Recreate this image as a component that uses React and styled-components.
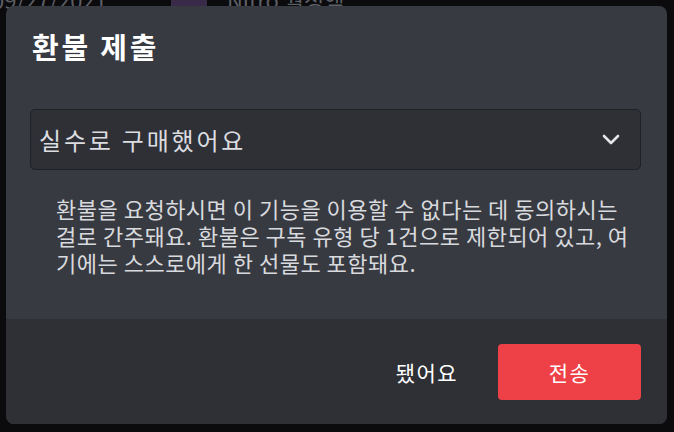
import React from "react";
import styled, { createGlobalStyle } from "styled-components";

const GlobalStyle = createGlobalStyle`
  html, body {
    margin: 0;
    padding: 0;
    background: #0b0b0d;
    overflow: hidden;
  }
  body {
    font-family: "Noto Sans CJK KR", "Noto Sans", sans-serif;
  }
`;

const Page = styled.div`
  width: 674px;
  height: 432px;
  position: relative;
  background: #0b0b0d;
  overflow: hidden;
`;

const BehindRow = styled.div`
  display: flex;
  align-items: center;
  margin-top: -14px;
  margin-left: -8px;
  height: 26px;
  color: #5d5f66;
  font-size: 22px;
  white-space: nowrap;
`;

const Badge = styled.span`
  display: inline-block;
  width: 36px;
  height: 22px;
  border-radius: 3px;
  background: #3a2a4a;
  margin: 0 20px 0 64px;
`;

const Overlay = styled.div`
  position: absolute;
  top: 6px;
  left: 6px;
  width: 661px;
  height: 418px;
  display: flex;
  flex-direction: column;
  border-radius: 8px;
  overflow: hidden;
  background: #383a42;
`;

const Body = styled.div`
  flex: 1;
  display: flex;
  flex-direction: column;
  padding: 22px 26px 0 24px;
`;

const Title = styled.h2`
  margin: 0;
  color: #ffffff;
  font-size: 29px;
  font-weight: 700;
  line-height: 36px;
  letter-spacing: 2.8px;
  padding-left: 2px;
`;

const Select = styled.div`
  margin-top: 45px;
  height: 61px;
  box-sizing: border-box;
  display: flex;
  align-items: center;
  justify-content: space-between;
  padding: 0 20px 0 8px;
  background: #2e3036;
  border: 1px solid #1f2125;
  border-radius: 5px;
  color: #dcdde0;
  font-size: 24px;
  letter-spacing: 2.8px;
`;

const Description = styled.p`
  margin: 25px 0 0;
  padding: 0 8px 0 26px;
  color: #d9dade;
  font-size: 22px;
  line-height: 27px;
  letter-spacing: 0.5px;
`;

const Footer = styled.div`
  height: 105px;
  display: flex;
  align-items: center;
  justify-content: flex-end;
  gap: 40px;
  padding: 0 26px 0 0;
  background: #2e3035;
`;

const LinkButton = styled.button`
  border: none;
  background: none;
  color: #ffffff;
  font-family: inherit;
  font-size: 21px;
  letter-spacing: 1.4px;
  padding: 0;
  cursor: pointer;
`;

const PrimaryButton = styled.button`
  width: 143px;
  height: 56px;
  border: none;
  border-radius: 4px;
  background: #ee4147;
  color: #ffffff;
  font-family: inherit;
  font-size: 21px;
  letter-spacing: 1.4px;
  cursor: pointer;
`;

const Chevron = () => (
  <svg width="18" height="12" viewBox="0 0 18 12">
    <polyline
      points="2,2 9,9 16,2"
      fill="none"
      stroke="#e3e4e6"
      strokeWidth="2.6"
      strokeLinecap="round"
      strokeLinejoin="round"
    />
  </svg>
);

export default function App() {
  return (
    <Page>
      <GlobalStyle />
      <BehindRow>
        <span>09/27/2021</span>
        <Badge />
        <span>Nitro 월정액</span>
      </BehindRow>
      <Overlay>
        <Body>
          <Title>환불 제출</Title>
          <Select>
            <span>실수로 구매했어요</span>
            <Chevron />
          </Select>
          <Description>
            환불을 요청하시면 이 기능을 이용할 수 없다는 데 동의하시는 걸로 간주돼요. 환불은 구독 유형 당 1건으로 제한되어 있고, 여기에는 스스로에게 한 선물도 포함돼요.
          </Description>
        </Body>
        <Footer>
          <LinkButton>됐어요</LinkButton>
          <PrimaryButton>전송</PrimaryButton>
        </Footer>
      </Overlay>
    </Page>
  );
}
